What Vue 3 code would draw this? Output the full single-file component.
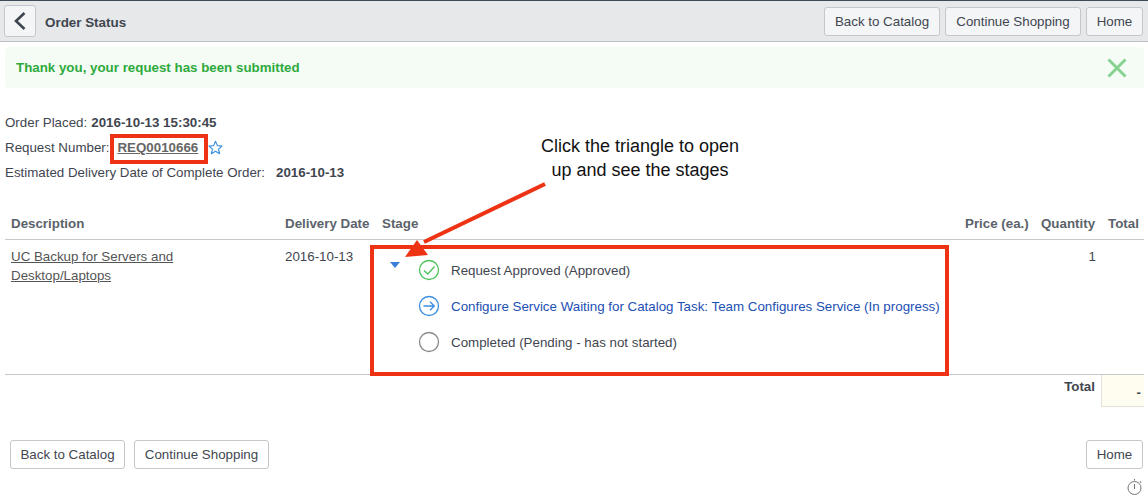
<template>
  <div class="page">
    <header class="topbar">
      <button class="btn back-btn" aria-label="Back">
        <svg width="14" height="20" viewBox="0 0 14 20"><path d="M11.5 2 L3 10 L11.5 18" fill="none" stroke="#3d4650" stroke-width="2.6" /></svg>
      </button>
      <h1 class="title">Order Status</h1>
      <div class="actions">
        <button class="btn catalog">Back to Catalog</button>
        <button class="btn shopping">Continue Shopping</button>
        <button class="btn home">Home</button>
      </div>
    </header>

    <div class="alert">
      <span>Thank you, your request has been submitted</span>
      <svg class="alert-close" width="20" height="20" viewBox="0 0 20 20"><path d="M1.5 1.5 L18.5 18.5 M18.5 1.5 L1.5 18.5" stroke="#86d391" stroke-width="3" /></svg>
    </div>

    <section class="meta">
      <p>Order Placed: <b>2016-10-13 15:30:45</b></p>
      <p>
        Request Number:
        <a class="req-link">REQ0010666</a>
        <svg class="star" width="15" height="15" viewBox="0 0 24 24"><path d="M12 2 L15 9 L22.500 9.600 L16.800 14.500 L18.600 22 L12 18 L5.400 22 L7.200 14.500 L1.500 9.600 L9 9 Z" fill="none" stroke="#3b8ee0" stroke-width="1.8" stroke-linejoin="round" /></svg>
      </p>
      <p>Estimated Delivery Date of Complete Order: <b class="est-date">2016-10-13</b></p>
    </section>

    <section class="order-table">
      <div class="row head">
        <div>Description</div>
        <div>Delivery Date</div>
        <div>Stage</div>
        <div>Price (ea.)</div>
        <div>Quantity</div>
        <div>Total</div>
      </div>
      <div class="row body">
        <div><a class="item-link">UC Backup for Servers and Desktop/Laptops</a></div>
        <div>2016-10-13</div>
        <div class="stages">
          <span class="caret"></span>
          <ul class="stage-list">
            <li v-for="stage in stages" :key="stage.label" :class="stage.kind">
              <svg width="22" height="22" viewBox="0 0 22 22">
                <circle cx="11" cy="11" r="9.500" fill="none" :stroke="stage.color" stroke-width="1.300" />
                <path v-if="stage.kind === 'done'" d="M6 11.500 L9.800 15 L16.500 7.500" fill="none" :stroke="stage.color" stroke-width="1.300" />
                <path v-if="stage.kind === 'active'" d="M5.500 11 H16 M12 6.800 L16.300 11 L12 15.200" fill="none" :stroke="stage.color" stroke-width="1.300" />
              </svg>
              <span>{{ stage.label }}</span>
            </li>
          </ul>
        </div>
        <div></div>
        <div class="qty">1</div>
        <div></div>
      </div>
      <div class="total-row">
        <b>Total</b>
        <div class="total-cell">-</div>
      </div>
    </section>

    <footer class="bottom">
      <button class="btn catalog">Back to Catalog</button>
      <button class="btn shopping">Continue Shopping</button>
      <button class="btn home">Home</button>
    </footer>

    <svg class="timer" width="16" height="18" viewBox="0 0 16 18">
      <circle cx="7.500" cy="10" r="6.500" fill="none" stroke="#777" stroke-width="1" />
      <path d="M7.500 1 V2.500 M7.500 6 V11 M13 3.500 L14.200 4.700" stroke="#777" stroke-width="1.100" fill="none" />
    </svg>

    <!-- annotations drawn on top of the screenshot -->
    <div class="mark mark-req"></div>
    <div class="mark mark-stages"></div>
    <p class="callout">Click the triangle to open up and see the stages</p>
    <svg class="arrow" width="1148" height="504" viewBox="0 0 1148 504">
      <path d="M545 184 L424 242" stroke="#ee3314" stroke-width="4" />
      <path d="M405 257 L417 240 L428 255 Z" fill="#ee3314" />
    </svg>
  </div>
</template>

<script setup>
const stages = [
  { label: 'Request Approved (Approved)', kind: 'done', color: '#4cc35c' },
  { label: 'Configure Service Waiting for Catalog Task: Team Configures Service (In progress)', kind: 'active', color: '#3b8ee0' },
  { label: 'Completed (Pending - has not started)', kind: 'pending', color: '#8a8a8a' },
]
</script>

<style scoped>
.page {
  position: relative;
  width: 1148px;
  height: 504px;
  overflow: hidden;
  background: #fff;
  font-family: "Liberation Sans", Arial, sans-serif;
  font-size: 13.330px;
  color: #3f4650;
}

/* top bar */
.topbar {
  display: flex;
  align-items: center;
  height: 40px;
  padding: 0 5px 0 4px;
  background: #e6e8ea;
  border-top: 1px solid #3d4a58;
  border-bottom: 1px solid #bcbfc3;
}

.title {
  margin: 2px 0 0 9px;
  font-size: 13.400px;
  font-weight: bold;
}

.actions {
  display: flex;
  gap: 5px;
  margin-left: auto;
}

.btn {
  height: 29px;
  padding: 0;
  box-sizing: border-box;
  border: 1px solid #c4c7cb;
  border-radius: 3px;
  background: #f4f5f6;
  color: #3f4650;
  font-family: inherit;
  font-size: 13.330px;
}

.back-btn {
  display: flex;
  align-items: center;
  justify-content: center;
  width: 32px;
  height: 32px;
}

.catalog { width: 116px; }
.shopping { width: 136px; }
.home { width: 57px; }

/* alert */
.alert {
  display: flex;
  align-items: center;
  justify-content: space-between;
  height: 41px;
  margin: 5px 4px 0 5px;
  padding: 0 17px 0 11px;
  background: #f4fcf5;
  border-radius: 3px;
  color: #2eaa3c;
  font-weight: bold;
}

/* order info */
.meta {
  margin: 22px 0 0 5px;
}

.meta p {
  display: flex;
  align-items: center;
  gap: 4px;
  height: 25px;
  margin: 0;
}

.req-link {
  margin-left: 4px;
  font-weight: bold;
  color: #666;
  text-decoration: underline;
}

.star {
  margin-left: 6px;
}

.est-date {
  margin-left: 7px;
}

/* table */
.order-table {
  margin: 25px 4px 0 5px;
}

.row {
  display: grid;
  grid-template-columns: 274px 97px 583px 76px 67px 36px;
  padding-left: 6px;
  box-sizing: border-box;
  border-bottom: 1px solid #c6c8ca;
}

.head {
  height: 30px;
  padding-bottom: 2px;
  align-items: center;
  font-weight: bold;
  color: #5c636b;
}

.body {
  height: 135px;
  padding-top: 7px;
  line-height: 19px;
}

.item-link {
  display: block;
  width: 190px;
  color: #555;
  text-decoration: underline;
}

.stages {
  display: flex;
  align-items: flex-start;
  margin-left: -12px;
}

.caret {
  width: 0;
  height: 0;
  margin: 15px 0 0 20px;
  border-left: 5px solid transparent;
  border-right: 5px solid transparent;
  border-top: 6px solid #3b7fd8;
}

.stage-list {
  margin: 5px 0 0 18px;
  padding: 0;
  list-style: none;
}

.stage-list li {
  display: flex;
  align-items: center;
  gap: 11px;
  height: 36px;
  white-space: nowrap;
}

.stage-list li.active {
  color: #1c4fb4;
}

.qty {
  padding-right: 12px;
  text-align: right;
}

.total-row {
  display: flex;
  justify-content: flex-end;
  gap: 6px;
}

.total-row b {
  padding-top: 4px;
}

.total-cell {
  width: 43px;
  height: 32px;
  padding: 10px 3px 0 0;
  box-sizing: border-box;
  text-align: right;
  font-weight: bold;
  background: #fffdf0;
  border-left: 1px solid #e2e2d8;
  border-bottom: 1px solid #e2e2d8;
}

/* footer buttons */
.bottom {
  display: flex;
  gap: 9px;
  margin: 33px 5px 0 10px;
}

.bottom .catalog { width: 115px; }
.bottom .shopping { width: 135px; }

.bottom .home {
  margin-left: auto;
}

.bottom .btn {
  background: #fff;
}

.timer {
  position: absolute;
  top: 478px;
  left: 1127px;
}

/* annotation layer */
.mark {
  position: absolute;
  box-sizing: border-box;
  border: 4px solid #ee3314;
}

.mark-req {
  left: 110px;
  top: 134px;
  width: 98px;
  height: 30px;
}

.mark-stages {
  left: 370px;
  top: 245px;
  width: 579px;
  height: 131px;
}

.callout {
  position: absolute;
  left: 540px;
  top: 134px;
  width: 200px;
  margin: 0;
  font-size: 18px;
  line-height: 24px;
  text-align: center;
  color: #111;
}

.arrow {
  position: absolute;
  left: 0;
  top: 0;
  pointer-events: none;
}
</style>
